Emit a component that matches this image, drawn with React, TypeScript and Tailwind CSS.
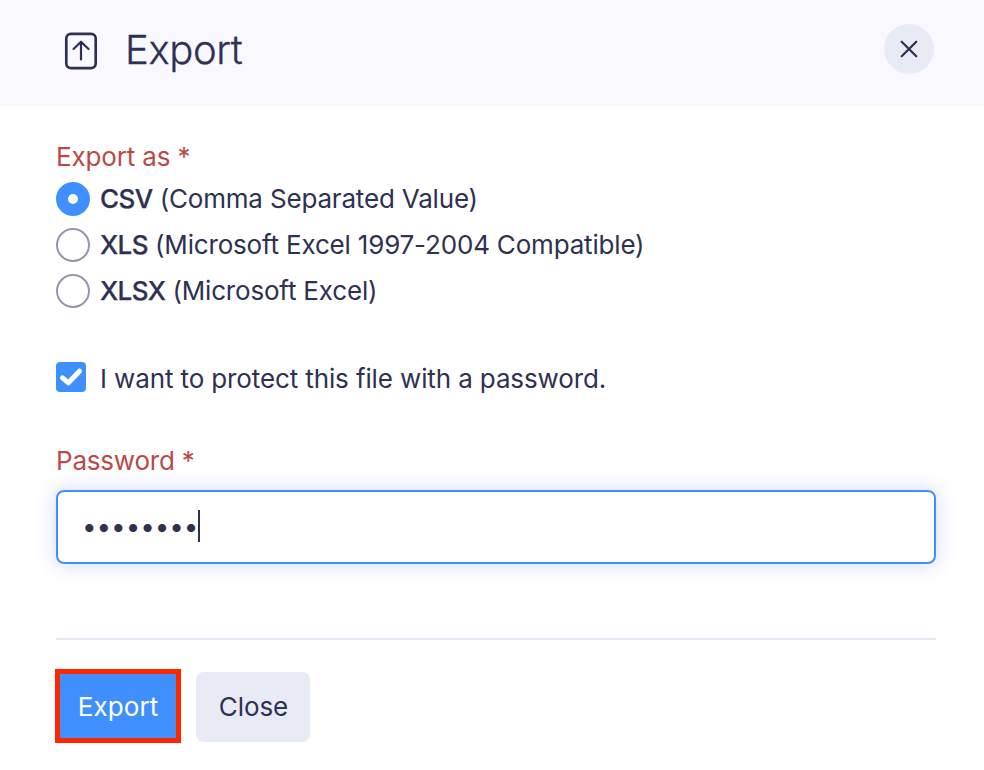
import { useState } from "react";

const formats = [
	{ id: "csv", name: "CSV", detail: "(Comma Separated Value)" },
	{ id: "xls", name: "XLS", detail: "(Microsoft Excel 1997-2004 Compatible)" },
	{ id: "xlsx", name: "XLSX", detail: "(Microsoft Excel)" },
];

const ExportIcon = () => (
	<svg
		className="w-[34px] h-[38px]"
		viewBox="0 0 34 38"
		fill="none"
		stroke="currentColor"
		strokeLinecap="round"
		strokeLinejoin="round"
	>
		<rect x="2.3" y="1.9" width="29.4" height="34.2" rx="4.5" strokeWidth="2.7" />
		<path d="M17 27.5V10M9.5 17L17 9.7L24.5 17" strokeWidth="2.2" />
	</svg>
);

const CloseIcon = () => (
	<svg
		className="w-[18px] h-[18px]"
		viewBox="0 0 18 18"
		fill="none"
		stroke="currentColor"
		strokeWidth="2.2"
		strokeLinecap="round"
	>
		<path d="M1.7 1.7L16.3 16.3M16.3 1.7L1.7 16.3" />
	</svg>
);

const CheckIcon = () => (
	<svg
		className="w-[30px] h-[30px]"
		viewBox="0 0 30 30"
		fill="none"
		stroke="white"
		strokeWidth="5"
		strokeLinecap="round"
		strokeLinejoin="round"
	>
		<path d="M6.5 15.8L12.4 20.8L23.5 9.2" />
	</svg>
);

const App = () => {
	const [format, setFormat] = useState("csv");
	const [protect, setProtect] = useState(true);

	return (
		<div className="w-[984px] h-[770px] overflow-hidden bg-white text-[#2e3152] font-['Inter',sans-serif] text-[26px] leading-[34px]">
			<header className="flex items-start justify-between h-[106px] bg-[#f9f8ff] pl-16 pr-[50px] pt-6">
				<div className="flex items-center h-[54px]">
					<ExportIcon />
					<h1 className="ml-[27px] -mt-[2px] text-[40px] leading-[54px] tracking-[-0.4px] font-light [-webkit-text-stroke:0.3px]">
						Export
					</h1>
				</div>
				<button
					aria-label="Close dialog"
					className="flex items-center justify-center w-[50px] h-[50px] rounded-full bg-[#e8eaf6]"
				>
					<CloseIcon />
				</button>
			</header>

			<main className="pl-[56px] pr-12 pt-[34px]">
				<div className="text-[#b94a48] tracking-[-0.15px]">Export as *</div>
				<div className="flex flex-col gap-3 mt-2">
					{formats.map((item) => (
						<button
							key={item.id}
							role="radio"
							aria-checked={format === item.id}
							onClick={() => setFormat(item.id)}
							className="flex items-center gap-[10px] h-[34px] text-left"
						>
							{format === item.id ? (
								<span className="flex items-center justify-center w-[34px] h-[34px] rounded-full bg-[#408fff]">
									<span className="w-[10px] h-[10px] rounded-full bg-white" />
								</span>
							) : (
								<span className="w-[34px] h-[34px] rounded-full border-2 border-[#9695ad]" />
							)}
							<span className="whitespace-nowrap tracking-[-0.18px]">
								<span className="font-medium tracking-[-0.6px] [-webkit-text-stroke:0.25px]">
									{item.name}
								</span>{" "}
								{item.detail}
							</span>
						</button>
					))}
				</div>

				<button
					role="checkbox"
					aria-checked={protect}
					onClick={() => setProtect(!protect)}
					className="flex items-start gap-[14px] mt-[54px] h-[34px]"
				>
					<span className="w-[30px] h-[30px] rounded-[4px] bg-[#408fff]">
						{protect && <CheckIcon />}
					</span>
					<span className="whitespace-nowrap tracking-[-0.12px]">
						I want to protect this file with a password.
					</span>
				</button>

				<div className="mt-12 text-[#b94a48] tracking-[-0.2px]">Password *</div>
				<div className="flex items-center mt-[12px] h-[74px] pl-[24px] pb-[2px] rounded-[8px] border-2 border-[#408fff] shadow-[0_0_20px_rgba(64,90,255,0.24)]">
					<span className="pt-[2px] tracking-[-0.08px]">••••••••</span>
					<span className="w-[2px] h-8 bg-[#2e3152]" />
				</div>

				<div className="mt-[74px] h-[2px] bg-[#e9e8f8]" />

				<div className="flex items-start mt-[29px]">
					<button className="flex items-center justify-center -ml-px w-[126px] h-[74px] pt-[2px] border-[5px] border-[#ff2600] bg-[#408fff] text-white tracking-[0.1px]">
						Export
					</button>
					<button className="flex items-center justify-center ml-[15px] mt-[3px] w-[114px] h-[70px] pl-px rounded-[8px] bg-[#e8eaf6] tracking-[-0.1px]">
						Close
					</button>
				</div>
			</main>
		</div>
	);
};

export default App;
